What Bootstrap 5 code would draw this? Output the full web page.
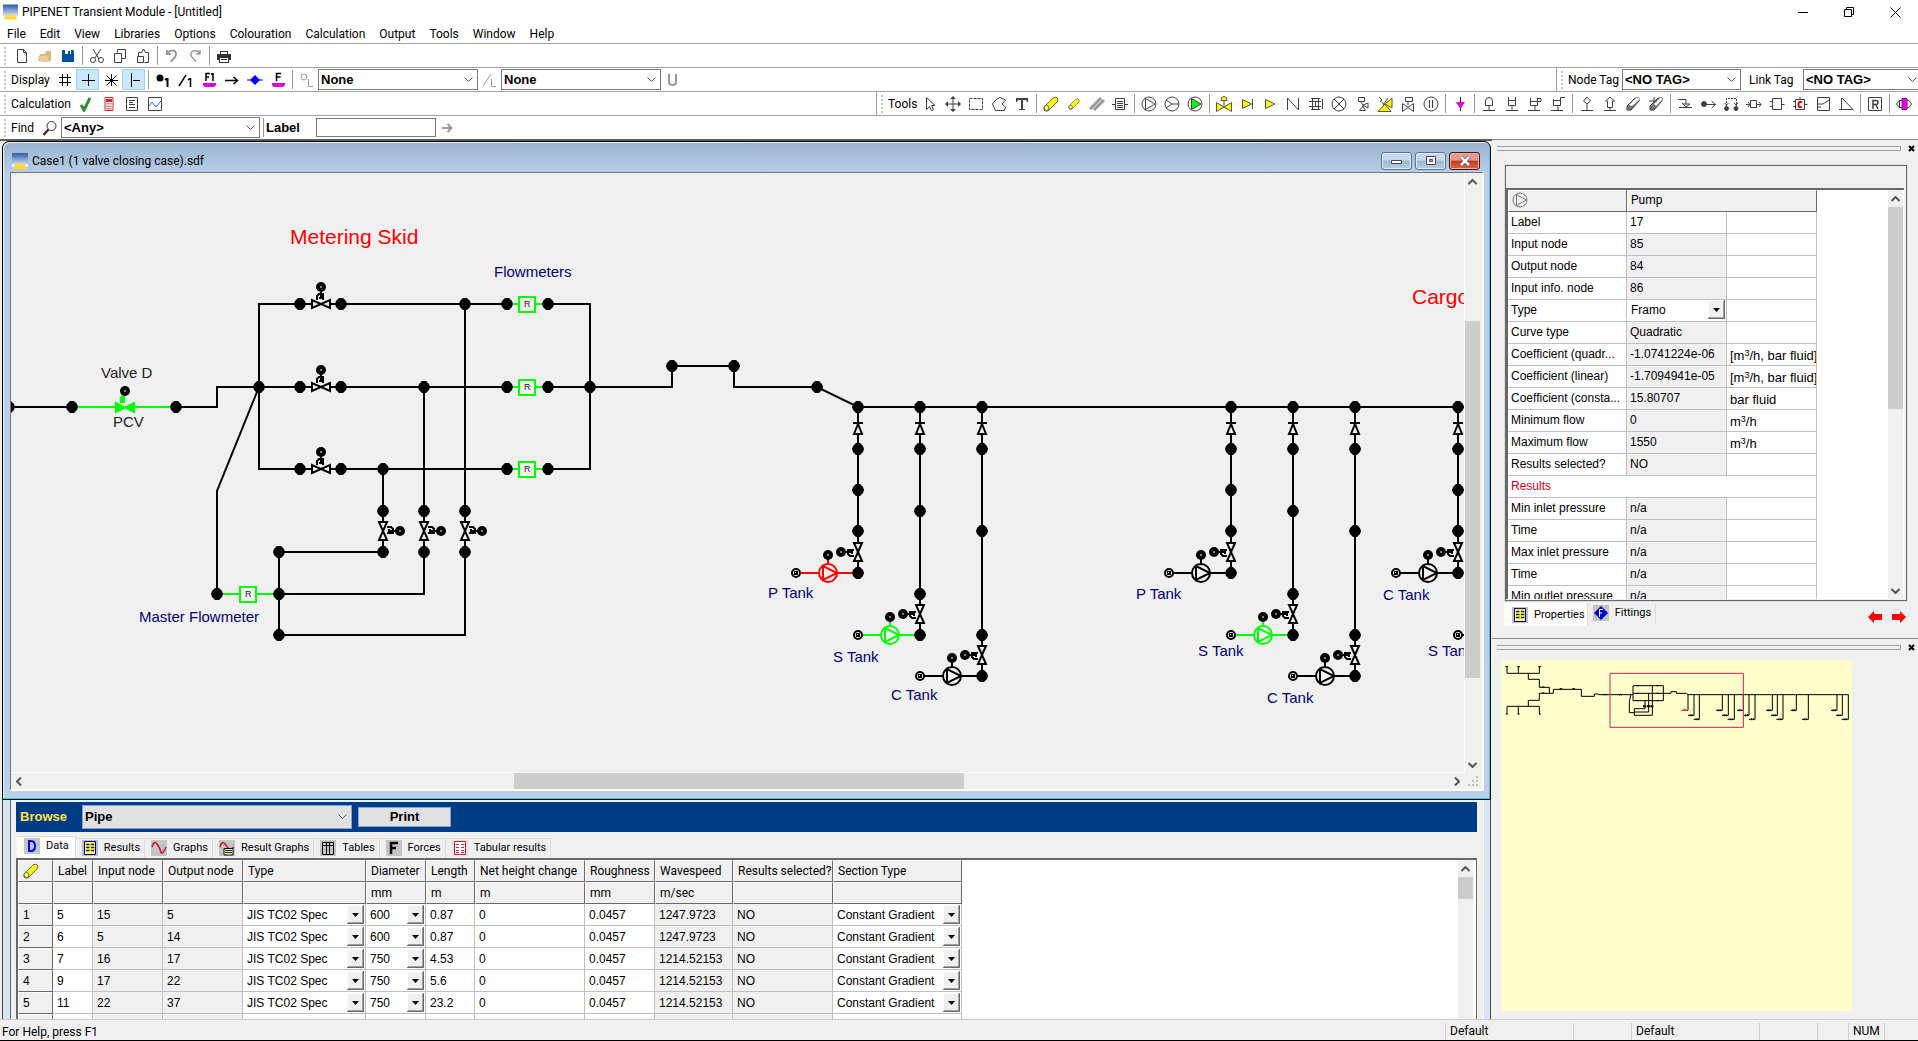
<!DOCTYPE html>
<html lang="en">
<head>
<meta charset="utf-8">
<meta name="viewport" content="width=device-width, initial-scale=1">
<title>PIPENET Transient Module - [Untitled]</title>
<link rel="stylesheet" href="https://cdn.jsdelivr.net/npm/bootstrap@5.3.0/dist/css/bootstrap.min.css">
<style>
:root{--face:#f0f0f0;--line:#a0a0a0;--dark:#696969;--ui:Roboto,"Open Sans",sans-serif;--grid:"Liberation Sans",Arial,sans-serif}
body{font:12px/16px var(--ui);color:#000;background:#fff;height:100vh;overflow:hidden}
button{padding:0;border:0;background:none;color:inherit;font:inherit}
a{color:inherit;text-decoration:none}
svg{display:block;flex:none}
.titlebar{height:24px;padding-left:3px}
.titlebar button{width:46px;height:20px;display:flex;align-items:center;justify-content:center}
.menubar{height:19px;padding-left:7px;gap:14px}
.tbrow{height:24px;border-top:1px solid var(--line);overflow:hidden}
.tb{height:23px;padding-left:10px;position:relative;align-items:center;display:flex;background:#fff}
.tb::before{content:"";position:absolute;left:4px;top:3px;bottom:2px;border-left:2px dotted #c4c4c4}
.tb-right{border-left:1px solid var(--line);flex:none}
.tb button{width:23px;height:21px;display:flex;align-items:center;justify-content:center;flex:none;color:#404040}
.tb button.on{background:#cce8ff;border:1px solid #99d1ff}
.tb i{width:6px;height:19px;flex:none;display:flex;justify-content:center}
.tb i::before{content:"";border-left:1px solid #999}
.tb label,.tb .cap{flex:none;padding-left:1px}
.combo{appearance:none;border:1px solid #7a7a7a;border-radius:0;font:bold 13px/16px var(--grid);height:21px;padding:0 20px 0 2px;flex:none;color:#000;
 background:#fff url("data:image/svg+xml,%3Csvg xmlns='http://www.w3.org/2000/svg' width='9' height='6'%3E%3Cpath d='M.5.5l4 4 4-4' fill='none' stroke='%23555'/%3E%3C/svg%3E") no-repeat right 4px center}
.findbox{border:1px solid #7a7a7a;width:120px;height:19px;font:13px/16px var(--grid);flex:none}
.mdi{background:var(--face);border-top:2px solid #5f5f5f;min-width:0}
.docwin{margin:0 1px 0 2px;border:1px solid #000;border-radius:7px 7px 0 0;background:#b9d1ea;padding:0 6px 8px 7px;box-shadow:inset -1px -1px 0 #41c8e8,inset 1px 1px 0 #e8f2fb;min-height:0;background-image:linear-gradient(#9ab3d0,#b9d1ea 34px)}
.doctitle{height:30px;padding:0 4px 0 2px}
.docbtns{gap:3px}
.docbtn{width:31px;height:18px;border:1px solid #5c7390!important;border-radius:3px;background:linear-gradient(#c6d8ec 45%,#9db7d3 50%,#b7cde4)!important;box-shadow:inset 0 0 0 1px #dfeaf5;display:flex;align-items:center;justify-content:center}
.docbtn.shut{background:linear-gradient(#e29a8b 45%,#c4391f 50%,#d5674b)!important;border-color:#4c1410!important;box-shadow:inset 0 0 0 1px #e9b3a7}
.client{border:solid;border-color:#777 #fff #fff #777;border-width:1px 2px 2px 1px;background:var(--face);min-height:0}
.client>div{min-height:0}
.plan{flex:1 1 0;min-width:0;overflow:hidden;border-right:1px solid #fff;border-bottom:1px solid #fff}
.plan text{font:15px var(--grid);fill:#00007c}
.plan .hd{font-size:21px;fill:#f00}
.plan .blk{fill:#222}
.plan .meter{font-size:9px;fill:#222}
.sbv{width:15px;flex:none;display:flex;flex-direction:column;background:var(--face)}
.client .sbv{margin-right:2px}
.sbh{height:16px;flex:none;display:flex;background:var(--face)}
.sbv button,.sbh button{flex:none;width:15px;height:17px;display:flex;align-items:center;justify-content:center}
.thumb{background:#cdcdcd}
.lower{height:219px;flex:none;margin:0 1px 0 2px;border-left:1px solid #444;border-right:1px solid #444;background:#d7e4f2;padding:0 6px 0 7px;overflow:hidden}
.lower-in{background:var(--face);border-left:1px solid #666;padding:2px 6px 0 5px;border-right:1px solid #fff}
.browsebar{background:#003c85;height:30px;padding-left:4px;flex:none}
.browsebar label{color:#ffe645;font:bold 13px/16px var(--grid);width:62px}
.browsebar .combo{width:270px;height:24px;background-color:#e1e1e1;border-color:#7ea6d8}
.browsebar button{width:93px;height:20px;margin-left:6px;background:#e1e1e1;border:1px solid #7ea6d8;font:bold 13px/16px var(--grid)}
.tabs{height:26px;padding-left:1px;flex:none;align-items:flex-end;border:0;font-size:11px}
.tabs button{height:20px;display:flex;align-items:center;gap:6px;padding:0 4px 2px 6px;border:1px solid #dcdcdc;border-width:1px 1px 0 0;white-space:nowrap}
.tabs button.on{height:22px;background:#fff;padding:0 6px 3px 7px}
.gridbox{border:2px solid var(--dark);border-width:2px 1px 0 2px;background:#fff;overflow:hidden;min-height:0}
.gridbox .sbv{margin-right:3px}
.g{table-layout:fixed;border-collapse:separate;border-spacing:0;flex:none;width:0}
.g td,.g th{height:22px;padding:0 2px 0 4px;font:12px/16px var(--grid);white-space:nowrap;overflow:hidden;border:solid #c0c0c0;border-width:0 1px 1px 0;vertical-align:middle}
.g th{background:var(--face);font-family:var(--ui);border:1px solid #fff;border-right-color:var(--dark);border-bottom-color:var(--dark)}
.g tbody th{font-family:var(--grid)}
.g .ro{background:var(--face)}
.g td.p-sel{padding:0 1px 0 0}
.g select{appearance:none;border:0;border-radius:0;width:100%;height:20px;padding:0 18px 0 4px;font:12px/16px var(--grid);color:#000;display:block;
 background:#fff url("data:image/svg+xml,%3Csvg xmlns='http://www.w3.org/2000/svg' width='17' height='19'%3E%3Cpath d='M0 0h17v19H0z' fill='%23696969'/%3E%3Cpath d='M0 0h16v18H0z' fill='%23fff'/%3E%3Cpath d='M1 1h15v17H1z' fill='%23a0a0a0'/%3E%3Cpath d='M1 1h14v16H1z' fill='%23f0f0f0'/%3E%3Cpath d='M5 8h7l-3.5 4z'/%3E%3C/svg%3E") no-repeat right 0}
.dock{width:426px;flex:none;background:var(--face);border-top:1px solid #888}
.grip{height:18px;padding:0 1px 1px 5px;gap:4px;flex:none}
.grip span{flex:1;height:5px;border:1px solid var(--line);border-left:0}
.grip button{width:12px;height:12px;display:flex;align-items:center;justify-content:center}
.props{margin:7px 11px 0 13px;height:436px;border:1px solid var(--dark);outline:1px solid #dedede;flex:none;display:flex;flex-direction:column}
.props-body{border:solid var(--dark);border-width:2px 0 0 2px;background:#fff;margin:22px 2px 1px 0;min-height:0;overflow:hidden;flex:1}
.props .sbv{margin-right:1px}
.props .g td,.props .g th{padding:0 2px 2px 3px}
.props .g td.p-sel{padding:0 1px 1px 0}
.props .g td.unit{font-size:13px;padding:3px 3px 0 3px}
.g .red{color:#d00020}
.g sup{font-size:9px;line-height:0}
.ptabs{padding:2px 12px 0;height:37px;flex:none;font-size:11px}
.ptabs .ptab{height:20px;display:flex;align-items:center;gap:6px;padding:0 4px 0 5px;border-right:1px solid #dcdcdc}
.ptabs .ptab.on{height:23px;background:#fff;padding:0 2px 0 8px}
.over{border-top:1px solid #888}
.mapbox{margin:3px 0 0 9px;width:351px;height:351px;background:#ffffcb}
.statusbar{height:22px;flex:none;background:var(--face);border-top:1px solid #ccc;border-bottom:1px solid #000;padding:3px 0 0 2px}
.statusbar span{border-left:1px solid #d0d0d0;height:17px;padding-left:4px;flex:none}
</style>
</head>
<body class="d-flex flex-column">

<svg width="0" height="0" class="position-absolute" aria-hidden="true">
<defs>
<linearGradient id="sky" x1="0" y1="0" x2="0" y2="1"><stop offset="0" stop-color="#2a5ca8"/><stop offset=".7" stop-color="#b4cbe6"/><stop offset="1" stop-color="#fff"/></linearGradient>
<symbol id="logo" viewBox="0 0 16 16"><path fill="url(#sky)" d="M0 0h16v14H0z"/><path fill="#ffd83a" d="M1 16c1-3 3-6 7-6s6 3 7 6z"/></symbol>
<symbol id="pipe" viewBox="0 0 16 16"><path d="M1 11l9-9 3-1 2 2-1 3-9 9-3 0-1-1z" fill="#ff0" stroke="#665" /><circle cx="3.500" cy="12" r="2.500" fill="#ff6" stroke="#665"/></symbol>
<symbol id="pumpi" viewBox="0 0 16 16"><g fill="none" stroke="currentColor"><circle cx="8" cy="8" r="7"/><path d="M4.500 2.500v11L14 8z"/></g></symbol>
<symbol id="sheet" viewBox="0 0 16 16"><path fill="#b8b8f0" d="M0 0h16v16H0z"/><path fill="#ff6" stroke="#000080" d="M2.500 1.500h11v13h-11z"/><path stroke="#222" stroke-width="1.500" d="M4 4.500h3.500M4 7.500h3.500M4 10.500h3.500M8.800 4.500h3.500M8.800 7.500h3.500M8.800 10.500h3.500"/></symbol>
<g id="nd"><path d="M-2-6h4l3 3 1 3-1 3-3 3h-4l-3-3-1-3 1-3z"/></g>
<g id="nc"><circle r="5"/><circle r="1" fill="#aaa"/></g>
<g id="ns"><circle r="4" fill="#f0f0f0" stroke="#000" stroke-width="2"/><path d="M-2-2h4v4h-4z" fill="#000"/><path d="M-1-1h1v1h-1z" fill="#fff"/></g>
<g id="vl" stroke="#000" stroke-width="2"><path d="M0-14v8" fill="none"/><path d="M-9-4v8L9-4v8z" fill="#f0f0f0"/><path d="M-4-4v-4l2-2h4v6M-2-6h3" fill="none"/><use href="#nc" y="-17" stroke="none"/></g>
<g id="ck" fill="#f0f0f0" stroke="#000" stroke-width="2"><path d="M-5-5h10M0-4l-4 10h8z"/></g>
<g id="dr"><path d="M-62 0H0M-30 0v-16" stroke="currentColor" stroke-width="2"/><circle cx="-30" r="9" fill="#f0f0f0" stroke="currentColor" stroke-width="2"/><path d="M-35-7v14l14-7z" fill="none" stroke="currentColor" stroke-width="2"/><use href="#nc" x="-30" y="-18"/><use href="#ns" x="-62"/><use href="#vl" transform="translate(0 -21) rotate(-90)"/><use href="#nd"/></g>
<g id="fm"><path d="M-16 0h32" stroke="#0f0" stroke-width="2"/><path d="M-8-7H8V8H-8z" fill="#f4f4f4" stroke="#0f0" stroke-width="2"/></g>
</defs>
</svg>

<header class="flex-shrink-0">
<div class="titlebar d-flex align-items-center">
<svg width="15" height="16"><use href="#logo"/></svg><span class="ms-1 flex-grow-1">PIPENET Transient Module - [Untitled]</span>
<button aria-label="Minimise"><svg width="10" height="10"><path d="M0 5.500h10" stroke="#000"/></svg></button>
<button aria-label="Restore"><svg width="10" height="10" fill="none" stroke="#000"><path d="M.5 2.500h7v7h-7zM2.500 2V.5h7v7H8"/></svg></button>
<button aria-label="Close"><svg width="11" height="11" stroke="#000"><path d="M.5.5l10 10M10.500.5l-10 10"/></svg></button>
</div>
<nav class="menubar d-flex align-items-center"><a href="#">File</a><a href="#">Edit</a><a href="#">View</a><a href="#">Libraries</a><a href="#">Options</a><a href="#">Colouration</a><a href="#">Calculation</a><a href="#">Output</a><a href="#">Tools</a><a href="#">Window</a><a href="#">Help</a></nav>

<div class="tbrow"><div class="tb">
<button aria-label="New"><svg width="16" height="16" fill="none" stroke="currentColor"><path d="M3.500 1.500h6l3 3v10h-9zM9.500 1.500v3h3"/></svg></button>
<button aria-label="Open"><svg width="16" height="16"><path d="M1 13l2-7h5l1-3h5v10z" fill="#dcb67a"/><path d="M1 8h9l3 6H4z" fill="#e9cd9c"/></svg></button>
<button aria-label="Save"><svg width="16" height="16"><path d="M2 2h11l1 1v11H2z" fill="#00539c"/><path d="M5 2h6v4H5z" fill="#fff"/><path d="M8 3h2v3H8z" fill="#00539c"/></svg></button><i></i>
<button aria-label="Cut"><svg width="16" height="16" fill="none" stroke="currentColor"><path d="M4 1l6 10M12 1L6 10"/><circle cx="4" cy="12" r="2.500"/><circle cx="12" cy="12" r="2.500"/></svg></button>
<button aria-label="Copy"><svg width="16" height="16" fill="none" stroke="currentColor"><path d="M5.500 4.500v-3h8v9h-4M2.500 5.500h7v9h-7z"/></svg></button>
<button aria-label="Paste"><svg width="16" height="16" fill="none" stroke="currentColor"><path d="M3.500 8V4.500h3L8.500 1l2 3.500h3v10h-4M2.500 8.500h6v6h-6z"/></svg></button><i></i>
<button aria-label="Undo"><svg width="16" height="16" fill="none" stroke="#999" stroke-width="2"><path d="M3 2v4h4M3 6c2-4 9-5 9 0 0 4-4 5-5 8"/></svg></button>
<button aria-label="Redo"><svg width="16" height="16" fill="none" stroke="#999" stroke-width="1.500"><path d="M13 2v4H9M13 6C11 1 3 2 4 7c0 3 4 4 5 7"/></svg></button><i></i>
<button aria-label="Print"><svg width="16" height="16"><path d="M4 3h8v3H4zM1 6h14v6h-2v3H3v-3H1z" fill="#333"/><path d="M5 4h6v2H5zM4 10h8v4H4z" fill="#fff"/><path d="M5 11h6v1H5z" fill="#333"/></svg></button>
</div></div>

<div class="tbrow d-flex"><div class="tb flex-grow-1"><span class="cap" style="width:43px">Display</span>
<button aria-label="Grid"><svg width="16" height="16" stroke="#000"><path d="M5.500 2v12M10.500 2v12M2 5.500h12M2 10.500h12"/></svg></button>
<button class="on" aria-label="Ortho"><svg width="16" height="16" stroke="#000"><path d="M8.500 2v12M2 8.500h13"/></svg></button>
<button aria-label="Isometric"><svg width="16" height="16" stroke="#000"><path d="M8.500 2v12M2 8.500h13M3.500 3.500l10 10M13.500 3.500l-10 10"/></svg></button>
<button class="on" aria-label="Snap"><svg width="16" height="16" stroke="#000"><path d="M5.500 1v14M7 8.500h7"/></svg></button><i></i>
<button aria-label="Node labels"><svg width="16" height="16"><circle cx="5" cy="6" r="3.500"/><path d="M12.500 6v9M10 8l2-1.500" stroke="#000" stroke-width="2"/></svg></button>
<button aria-label="Link labels"><svg width="16" height="16" stroke="#000" stroke-width="1.500"><path d="M1 14L8 3M12.500 6v9M10 8l2-1.500"/></svg></button>
<button aria-label="Fitting labels"><svg width="16" height="16" fill="none"><path d="M5 9V1.500h4M5 5h3M12 1v8M10 2.500l2-1" stroke="#000" stroke-width="1.500"/><path d="M2 11h13v2l-2 2H4l-2-2z" fill="#e000e0"/></svg></button>
<button aria-label="Direction"><svg width="16" height="16"><path d="M1 8.500h12M9.500 5l4 3.500-4 3.500" fill="none" stroke="#000" stroke-width="1.500"/></svg></button>
<button aria-label="Components"><svg width="16" height="16"><path d="M0 8h16" stroke="#00f"/><path d="M8 3l5 5-5 5-5-5z" fill="#00f"/></svg></button>
<button aria-label="Fittings"><svg width="16" height="16" fill="none"><path d="M6.500 9V1.500H11M6.500 5h4" stroke="#000" stroke-width="1.500"/><path d="M2 11h13v2l-2 2H4l-2-2z" fill="#e000e0"/></svg></button><i></i>
<button aria-label="Node attribute"><svg width="16" height="16" fill="none" stroke="#999"><circle cx="5" cy="5" r="3"/><path d="M9.500 7v7.500H14"/></svg></button>
<select class="combo" style="width:160px" aria-label="Node attribute shown"><option>None</option></select>
<button aria-label="Link attribute"><svg width="16" height="16" fill="none" stroke="#999"><path d="M1 14L9 2M9.500 7v7.500H14"/></svg></button>
<select class="combo" style="width:160px" aria-label="Link attribute shown"><option>None</option></select>
<button aria-label="Units"><svg width="16" height="16" fill="none" stroke="#999" stroke-width="2"><path d="M4 2v8q0 3 3.500 3T11 10V2"/></svg></button>
</div><div class="tb tb-right" style="width:362px"><label for="nt" style="width:55px">Node Tag</label><select id="nt" class="combo" style="width:119px"><option>&lt;NO TAG&gt;</option></select><label for="lt" class="ps-2" style="width:62px">Link Tag</label><select id="lt" class="combo" style="width:119px"><option>&lt;NO TAG&gt;</option></select></div></div>

<div class="tbrow d-flex"><div class="tb flex-grow-1"><span class="cap" style="width:64px">Calculation</span>
<button aria-label="Check"><svg width="16" height="16"><path d="M3 9l3 5 6-12" fill="none" stroke="#388a34" stroke-width="3"/></svg></button>
<button aria-label="Calculate"><svg width="16" height="16"><path d="M4 1.500h8v13H4z" fill="#fff" stroke="#c8282d"/><path d="M5 3h6v3H5z" fill="#c8282d"/><path d="M6 7v7M8 7v7M10 7v7" stroke="#c8282d" stroke-dasharray="1.500 1"/></svg></button>
<button aria-label="Report"><svg width="16" height="16" fill="none" stroke="currentColor"><path d="M2.500 1.500h11v13h-11zM5 4.500h6M5 6.500h4M5 8.500h6M5 11.500h6"/></svg></button>
<button aria-label="Graph"><svg width="16" height="16" fill="none" stroke="#444"><path d="M1.500 1.500h13v13h-13z"/><path d="M2 10l3-4 4 5 5-6" stroke="#2475b0"/></svg></button>
</div><div class="tb tb-right" style="width:1042px"><span class="cap" style="width:31px">Tools</span>
<button aria-label="Select"><svg width="16" height="16" fill="none" stroke="currentColor"><path d="M4.500 1.500v12l3-3 2 4 2-1-2-4h3.500z"/></svg></button>
<button aria-label="Pan"><svg width="16" height="16"><path d="M8 0l3 3H5zM8 16l3-3H5zM0 8l3-3v6zM16 8l-3-3v6zM7.500 3v10h1V3zM3 7.500v1h10v-1z" fill="#404040"/></svg></button>
<button aria-label="Area"><svg width="16" height="16" fill="none" stroke="currentColor" stroke-dasharray="3 1"><path d="M1.500 2.500h13v11h-13z"/></svg></button>
<button aria-label="Polygon"><svg width="16" height="16" fill="none" stroke="currentColor"><path d="M5 3.500L9 1.500 14.500 4 11 8l3.500 3-1 3.500h-9L1.500 8z"/></svg></button>
<button aria-label="Text"><svg width="16" height="16"><path d="M2 2h12v4h-1L12 4H9v9h2v1H5v-1h2V4H4L3 6H2z" fill="#404040"/></svg></button><i></i>
<button aria-label="Pipe"><svg width="16" height="16"><use href="#pipe"/></svg></button>
<button aria-label="Short pipe"><svg width="12" height="12"><use href="#pipe"/></svg></button>
<button aria-label="Duct"><svg width="16" height="16" stroke="#999" stroke-width="3"><path d="M1 13L12 2M5 14L15 4"/></svg></button>
<button aria-label="Equipment"><svg width="16" height="16" fill="none" stroke="currentColor"><path d="M3.500 2.500h9v11h-9zM5 5.500h6M5 7.500h6M5 9.500h6M5 11.500h6M0 8.500h3M13 8.500h3"/></svg></button><i></i>
<button aria-label="Pump"><svg width="16" height="16"><use href="#pumpi"/></svg></button>
<button aria-label="Turbo pump"><svg width="16" height="16" fill="none" stroke="currentColor"><circle cx="8" cy="8" r="7"/><path d="M2 4l6 4-6 4M8 8h7"/></svg></button>
<button aria-label="Booster"><svg width="16" height="16" stroke="currentColor"><circle cx="8" cy="8" r="7" fill="none"/><path d="M4.500 2.500v11L14 8z" fill="#0f0"/></svg></button><i></i>
<button aria-label="Valve"><svg width="16" height="16" fill="#ff0" stroke="#554"><path d="M.5 6.500v9l15-9v9zM8 10V4M5 4.500q0-4 3-4t3 4z"/></svg></button>
<button aria-label="Check valve"><svg width="16" height="16" fill="#ff0" stroke="#554"><path d="M3.500 3.500v9l9-4.500zM13.500 3v10"/></svg></button>
<button aria-label="Non-return valve"><svg width="16" height="16" fill="#ff0" stroke="#554"><path d="M3.500 3.500v9L13 8z"/></svg></button>
<button aria-label="Fluid damped valve"><svg width="16" height="16" fill="none" stroke="currentColor"><path d="M2.500 14V2l11 12V2"/></svg></button>
<button aria-label="Bursting disc"><svg width="16" height="16" fill="none" stroke="currentColor"><path d="M3 2.500h9M3 13.500h9M4.500 2v11M10.500 2v11M1 5.500h12M1 10.500h12M7.500 5v5M14.500 3v10"/></svg></button>
<button aria-label="Junction"><svg width="16" height="16" fill="none" stroke="currentColor"><circle cx="8" cy="8" r="7"/><path d="M3 3l10 10M13 3L3 13"/></svg></button>
<button aria-label="Regulator"><svg width="16" height="16" fill="none" stroke="currentColor"><path d="M4.500 1.500h6v4h-6zM6.500 5.500l3 4-4 5h6l-3-5M9 9l5-2v5z"/></svg></button>
<button aria-label="Relief valve"><svg width="16" height="16" fill="#ff0" stroke="#554"><path d="M1 15.500L8 8l6 7.500zM8 8l7-6v10z"/><path d="M2 1l3 3-2 1 4 3M11 2L6 9" fill="none"/></svg></button>
<button aria-label="Inertial valve"><svg width="16" height="16" fill="none" stroke="currentColor"><path d="M5.500 1.500h7v4h-7zM8 6v3M2.500 7.500v8l11-8v8z"/></svg></button>
<button aria-label="Surge relief"><svg width="16" height="16" fill="none" stroke="currentColor"><circle cx="8" cy="8" r="7"/><path d="M6.500 4v8M9.500 4v8"/></svg></button><i></i>
<button aria-label="Nozzle"><svg width="16" height="16"><path d="M8.500 1v14" stroke="#606"/><path d="M4 6h9l-4.500 7z" fill="#e000e0"/></svg></button><i></i>
<button aria-label="Accumulator"><svg width="16" height="16" fill="none" stroke="currentColor"><path d="M4.500 9.500V5q0-3.500 3.500-3.500T11.500 5v4.500zM8 10v4M2 14.500h12"/></svg></button>
<button aria-label="Simple tank"><svg width="16" height="16" fill="none" stroke="currentColor"><path d="M4.500 1v8.500h7V1M4.500 4.500h7M8 10v4M2 14.500h12"/></svg></button>
<button aria-label="Surge tank"><svg width="16" height="16" fill="none" stroke="currentColor"><path d="M3.500 2v7.500h7V2M3.500 5.500h7M10 2.500h4v3h-3M8 10v4M1 14.500h12"/></svg></button>
<button aria-label="Receiving vessel"><svg width="16" height="16" fill="none" stroke="currentColor"><path d="M3.500 3v6.500h7V1.500H15M3.500 4.500h7M8 10v4M1 14.500h12"/></svg></button><i></i>
<button aria-label="Vacuum breaker"><svg width="16" height="16" fill="none" stroke="currentColor"><path d="M8 1L4.500 5 8 8l3.500-3zM8 8v6M2 14.500h12"/></svg></button>
<button aria-label="Air valve"><svg width="16" height="16" fill="none" stroke="currentColor"><path d="M8 1L3.500 5h2v6.500h5V5h2zM8 11v3M2 14.500h12"/></svg></button>
<button aria-label="Cavity"><svg width="16" height="16" stroke="currentColor"><path d="M2 10l8-8h4v3l-8 9H2z" fill="#777"/><path d="M4 9l7-7h3v2L7 10z" fill="#fff" stroke="none"/></svg></button>
<button aria-label="Infinite pipe"><svg width="16" height="16" stroke="currentColor"><path d="M2 10l8-8h4v3l-8 9H2z" fill="#777"/><path d="M6 8l6-6h2v2L8 10z" fill="#fff" stroke="none"/><path d="M1 5h8M6 1v6" fill="none"/></svg></button><i></i>
<button aria-label="Sensor"><svg width="16" height="16" fill="none" stroke="currentColor"><path d="M1 3.500h8v5M2 11.500h13M5 7l4 4 4-3H6" /></svg></button>
<button aria-label="Information link"><svg width="16" height="16" fill="none" stroke="currentColor"><circle cx="4" cy="8" r="2.500" fill="#404040"/><path d="M6 8.500h9M11.500 5l4 3.500-4 3.500"/></svg></button>
<button aria-label="Pressure link"><svg width="16" height="16" fill="none" stroke="currentColor"><path d="M3.500 10V2.500h10V10" stroke-dasharray="2 1"/><circle cx="3.500" cy="12.500" r="2" fill="#404040"/><circle cx="13" cy="12.500" r="2" fill="#404040"/><path d="M1.500 7l2 2 2-2M11 7l2 2 2-2"/></svg></button>
<button aria-label="Transfer"><svg width="16" height="16" fill="none" stroke="currentColor"><path d="M4.500 4.500h6v7h-6zM0 8.500h4M2 6l2 2.500L2 11M11 8.500h4M13 6l2 2.500-2 2.500"/></svg></button>
<button aria-label="Block"><svg width="16" height="16" fill="none" stroke="currentColor"><path d="M3.500 2.500h9v11h-9zM1 5.500h2M1 10.500h2M13 8.500h2.500"/></svg></button>
<button aria-label="Controller"><svg width="16" height="16" fill="none" stroke="currentColor"><path d="M3.500 3.500h9v10h-9zM1 5.500h2M1 10.500h2M13 8.500h2.500M8 1v2"/><path d="M10 6.500q-3.500-2-3.500 2t3.500 2" stroke="#d00" stroke-width="2"/></svg></button>
<button aria-label="Curve"><svg width="16" height="16" fill="none" stroke="currentColor"><path d="M2.500 1.500h12v13h-12zM3 8h5l6-4M3 11h3"/></svg></button>
<button aria-label="Ramp"><svg width="16" height="16" fill="none" stroke="currentColor"><path d="M3.500 2v12M1 13.500h14L4 2"/></svg></button><i></i>
<button aria-label="Results"><svg width="16" height="16" fill="none" stroke="currentColor"><path d="M1.500 1.500h13v13h-13z"/><path d="M6 13V4.500h3q2 0 2 2t-2 2H6M9 9l2 4" stroke-width="1.500"/></svg></button><i></i>
<button aria-label="Flange"><svg width="16" height="16" fill="none" stroke="currentColor"><path d="M3 4.500h10l2.500 3.500L13 11.500H3L.5 8zM3.500 5v6"/><path d="M6 2.500h5v11H6z" fill="#e000e0" stroke="#a0a"/></svg></button>
</div></div>

<div class="tbrow d-flex"><div class="tb"><label for="fk" style="width:28px">Find</label>
<button aria-label="Search"><svg width="16" height="16" fill="none" stroke="#333"><circle cx="9.500" cy="6" r="4.500"/><path d="M6.500 9.500L1.500 15" stroke-width="2.500"/></svg></button>
<select id="fk" class="combo" style="width:199px"><option>&lt;Any&gt;</option></select><i></i><label for="fl" class="ps-0" style="width:50px;font:bold 13px/16px var(--grid)">Label</label>
<input id="fl" class="findbox"><button aria-label="Go"><svg width="12" height="12"><path d="M0 6h9M5.500 2l4 4-4 4" fill="none" stroke="#999" stroke-width="2"/></svg></button>
</div></div>
</header>

<main class="d-flex flex-grow-1" style="min-height:0">
<section class="mdi flex-grow-1 d-flex flex-column">
<div class="docwin flex-grow-1 d-flex flex-column">
<div class="doctitle d-flex align-items-center flex-shrink-0 pt-2">
<svg width="16" height="16"><use href="#logo"/></svg><span class="ms-1 flex-grow-1">Case1 (1 valve closing case).sdf</span>
<span class="docbtns d-flex"><button class="docbtn" aria-label="Minimise drawing"><svg width="13" height="8"><path d="M1.500 3.500h10v3h-10z" fill="#fff" stroke="#445"/></svg></button><button class="docbtn" aria-label="Maximise drawing"><svg width="12" height="10"><path d="M1.500.5h9v8h-9z" fill="#fff" stroke="#445"/><path d="M4.500 3.500h3v2h-3z" fill="#9db7d3" stroke="#445"/></svg></button><button class="docbtn shut" aria-label="Close drawing"><svg width="12" height="10"><path d="M2 1l8 8M10 1L2 9" stroke="#545" stroke-width="4"/><path d="M2 1l8 8M10 1L2 9" stroke="#fff" stroke-width="2.500"/></svg></button></span>
</div>
<div class="client flex-grow-1 d-flex flex-column">
<div class="d-flex flex-grow-1">
<div class="plan">
<svg width="100%" height="100%" role="img" aria-label="Pipe network">
<g transform="translate(-11 -173)">
<g fill="none" stroke="#000" stroke-width="2">
<path d="M11 407H72M176 407H217V387H259M259 304H590V469H259zM259 387H672V366H734V387H817L858 407H1466"/>
<path d="M259 387L217 491V594M465 304V635H279V552H383V469M424 387V594H279"/>
<path d="M858 407V573M920 407V635M982 407V676M1231 407V573M1293 407V635M1355 407V676M1458 407V573"/>
<path d="M72 407H176M217 594H279" stroke="#0f0"/>
</g>
<use href="#fm" x="527" y="304"/><use href="#fm" x="527" y="387"/><use href="#fm" x="527" y="469"/><use href="#fm" x="248" y="594"/>
<use href="#vl" x="321" y="304"/><use href="#vl" x="321" y="387"/><use href="#vl" x="321" y="469"/>
<use href="#vl" transform="translate(383 531) rotate(90)"/><use href="#vl" transform="translate(424 531) rotate(90)"/><use href="#vl" transform="translate(465 531) rotate(90)"/>
<path d="M116 403v9l18-9v9zM121 403v-5l3-4v9" fill="#0f0" stroke="#0f0" stroke-width="2"/><use href="#nc" x="125" y="391"/>
<use href="#nd" x="9" y="407"/><use href="#nd" x="72" y="407"/><use href="#nd" x="176" y="407"/><use href="#nd" x="259" y="387"/>
<use href="#nd" x="300" y="304"/><use href="#nd" x="341" y="304"/><use href="#nd" x="465" y="304"/><use href="#nd" x="507" y="304"/><use href="#nd" x="548" y="304"/>
<use href="#nd" x="300" y="387"/><use href="#nd" x="341" y="387"/><use href="#nd" x="424" y="387"/><use href="#nd" x="507" y="387"/><use href="#nd" x="548" y="387"/><use href="#nd" x="590" y="387"/>
<use href="#nd" x="300" y="469"/><use href="#nd" x="341" y="469"/><use href="#nd" x="383" y="469"/><use href="#nd" x="507" y="469"/><use href="#nd" x="548" y="469"/>
<use href="#nd" x="383" y="511"/><use href="#nd" x="424" y="511"/><use href="#nd" x="465" y="511"/><use href="#nd" x="383" y="552"/><use href="#nd" x="424" y="552"/><use href="#nd" x="465" y="552"/>
<use href="#nd" x="279" y="552"/><use href="#nd" x="279" y="594"/><use href="#nd" x="279" y="635"/><use href="#nd" x="217" y="594"/>
<use href="#nd" x="672" y="366"/><use href="#nd" x="734" y="366"/><use href="#nd" x="817" y="387"/>
<use href="#nd" x="858" y="407"/><use href="#nd" x="858" y="449"/><use href="#nd" x="858" y="490"/><use href="#nd" x="858" y="531"/>
<use href="#nd" x="920" y="407"/><use href="#nd" x="920" y="449"/><use href="#nd" x="920" y="511"/><use href="#nd" x="920" y="594"/>
<use href="#nd" x="982" y="407"/><use href="#nd" x="982" y="449"/><use href="#nd" x="982" y="531"/><use href="#nd" x="982" y="635"/>
<use href="#nd" x="1231" y="407"/><use href="#nd" x="1231" y="449"/><use href="#nd" x="1231" y="490"/><use href="#nd" x="1231" y="531"/>
<use href="#nd" x="1293" y="407"/><use href="#nd" x="1293" y="449"/><use href="#nd" x="1293" y="511"/><use href="#nd" x="1293" y="594"/>
<use href="#nd" x="1355" y="407"/><use href="#nd" x="1355" y="449"/><use href="#nd" x="1355" y="531"/><use href="#nd" x="1355" y="635"/>
<use href="#nd" x="1458" y="407"/><use href="#nd" x="1458" y="449"/><use href="#nd" x="1458" y="490"/><use href="#nd" x="1458" y="531"/>
<use href="#ck" x="858" y="428"/><use href="#ck" x="920" y="428"/><use href="#ck" x="982" y="428"/><use href="#ck" x="1231" y="428"/><use href="#ck" x="1293" y="428"/><use href="#ck" x="1355" y="428"/><use href="#ck" x="1458" y="428"/>
<use href="#dr" x="858" y="573" color="#f00"/><use href="#dr" x="920" y="635" color="#0f0"/><use href="#dr" x="982" y="676" color="#000"/>
<use href="#dr" x="1231" y="573" color="#000"/><use href="#dr" x="1293" y="635" color="#0f0"/><use href="#dr" x="1355" y="676" color="#000"/>
<use href="#dr" x="1458" y="573" color="#000"/><use href="#dr" x="1520" y="635" color="#000"/>
<text class="hd" x="290" y="244">Metering Skid</text><text class="hd" x="1412" y="304">Cargo Tanks</text>
<text x="494" y="277">Flowmeters</text><text x="139" y="622">Master Flowmeter</text>
<text class="blk" x="101" y="378">Valve D</text><text class="blk" x="113" y="427">PCV</text>
<text x="768" y="598">P Tank</text><text x="833" y="662">S Tank</text><text x="891" y="700">C Tank</text>
<text x="1136" y="599">P Tank</text><text x="1198" y="656">S Tank</text><text x="1267" y="703">C Tank</text><text x="1383" y="600">C Tank</text><text x="1428" y="656">S Tank</text>
<text class="meter" x="524" y="307">R</text><text class="meter" x="524" y="390">R</text><text class="meter" x="524" y="472">R</text><text class="meter" x="245" y="597">R</text>
</g></svg>
</div>
<div class="sbv"><button aria-label="Scroll up"><svg width="9" height="6"><path d="M.5 5l4-4 4 4" fill="none" stroke="#555" stroke-width="2"/></svg></button><div style="flex:131"></div><div class="thumb" style="flex:357"></div><div style="flex:78"></div><button aria-label="Scroll down"><svg width="9" height="6"><path d="M.5 1l4 4 4-4" fill="none" stroke="#555" stroke-width="2"/></svg></button></div>
</div>
<div class="sbh"><button aria-label="Scroll left"><svg width="6" height="9"><path d="M5 .5l-4 4 4 4" fill="none" stroke="#555" stroke-width="2"/></svg></button><div style="flex:487"></div><div class="thumb" style="flex:450"></div><div style="flex:484"></div><button aria-label="Scroll right"><svg width="6" height="9"><path d="M1 .5l4 4-4 4" fill="none" stroke="#555" stroke-width="2"/></svg></button>
<svg width="18" height="16" fill="#bfbfbf"><path d="M12 3h2v2h-2zM12 7h2v2h-2zM12 11h2v2h-2zM8 7h2v2H8zM8 11h2v2H8zM4 11h2v2H4z"/></svg></div>
</div>
</div>

<div class="lower d-flex"><div class="lower-in flex-grow-1 d-flex flex-column" style="min-width:0">
<div class="browsebar d-flex align-items-center"><label for="br">Browse</label><select id="br" class="combo"><option>Pipe</option></select><button>Print</button></div>
<div class="tabs d-flex" role="tablist">
<button class="on" role="tab"><svg width="16" height="16"><path fill="#c4c4c4" d="M0 0h16v16H0z"/><path d="M5 3v10h2q4 0 4-5T7 3z" fill="none" stroke="#00f" stroke-width="2"/></svg>Data</button>
<button role="tab"><svg width="16" height="16"><use href="#sheet"/></svg>Results</button>
<button role="tab"><svg width="16" height="16"><path fill="#c4c4c4" d="M0 0h16v16H0z"/><path d="M1 7q2-7 5-3t4 8 5-5" fill="none" stroke="#d0103a" stroke-width="1.500"/></svg>Graphs</button>
<button role="tab"><svg width="16" height="16"><path fill="#c4c4c4" d="M0 0h16v16H0z"/><path d="M1 7q2-7 5-3t4 5 5-2" fill="none" stroke="#d0103a" stroke-width="1.500"/><path d="M5 8.500h9v6.500H5z" fill="#ff6" stroke="#008"/><path d="M6 10.500h7M6 12.500h7" stroke="#222"/></svg>Result Graphs</button>
<button role="tab"><svg width="16" height="16"><path fill="#c4c4c4" d="M0 0h16v16H0z"/><path d="M2.500 2.500h11v12h-11zM2.500 5.500h11M6.500 2.500v12M9.500 2.500v12" fill="none" stroke="#000"/></svg>Tables</button>
<button role="tab"><svg width="16" height="16"><path fill="#c4c4c4" d="M0 0h16v16H0z"/><path d="M5 14V3h7M5 8h5" fill="none" stroke="#000" stroke-width="2.500"/></svg>Forces</button>
<button role="tab"><svg width="16" height="16"><path fill="#f3dede" d="M0 0h16v16H0z"/><path fill="#fff" stroke="#d02030" d="M2.500 1.500h11v13h-11z"/><path stroke="#d02030" d="M4 4.500h3M4 7.500h3M4 10.500h3M4 12.500h3M9 4.500h3M9 7.500h3M9 10.500h3M9 12.500h3"/></svg>Tabular results</button>
</div>
<div class="gridbox d-flex flex-grow-1">
<div class="flex-grow-1" style="min-width:0"><table class="g">
<colgroup><col style="width:35px"><col style="width:40px"><col style="width:70px"><col style="width:80px"><col style="width:123px"><col style="width:60px"><col style="width:49px"><col style="width:110px"><col style="width:70px"><col style="width:78px"><col style="width:100px"><col style="width:129px"></colgroup>
<thead><tr><th><svg width="16" height="16"><use href="#pipe"/></svg></th><th>Label</th><th>Input node</th><th>Output node</th><th>Type</th><th>Diameter</th><th>Length</th><th>Net height change</th><th>Roughness</th><th>Wavespeed</th><th>Results selected?</th><th>Section Type</th></tr>
<tr><th></th><th></th><th></th><th></th><th></th><th>mm</th><th>m</th><th>m</th><th>mm</th><th>m/sec</th><th></th><th></th></tr></thead>
<tbody>
<tr><th>1</th><td>5</td><td class="ro">15</td><td class="ro">5</td><td class="p-sel"><select aria-label="Type 1"><option>JIS TC02 Spec</option></select></td><td class="p-sel"><select aria-label="Diameter 1"><option>600</option></select></td><td>0.87</td><td>0</td><td>0.0457</td><td class="ro">1247.9723</td><td class="ro">NO</td><td class="p-sel"><select aria-label="Section 1"><option>Constant Gradient</option></select></td></tr>
<tr><th>2</th><td>6</td><td class="ro">5</td><td class="ro">14</td><td class="p-sel"><select aria-label="Type 2"><option>JIS TC02 Spec</option></select></td><td class="p-sel"><select aria-label="Diameter 2"><option>600</option></select></td><td>0.87</td><td>0</td><td>0.0457</td><td class="ro">1247.9723</td><td class="ro">NO</td><td class="p-sel"><select aria-label="Section 2"><option>Constant Gradient</option></select></td></tr>
<tr><th>3</th><td>7</td><td class="ro">16</td><td class="ro">17</td><td class="p-sel"><select aria-label="Type 3"><option>JIS TC02 Spec</option></select></td><td class="p-sel"><select aria-label="Diameter 3"><option>750</option></select></td><td>4.53</td><td>0</td><td>0.0457</td><td class="ro">1214.52153</td><td class="ro">NO</td><td class="p-sel"><select aria-label="Section 3"><option>Constant Gradient</option></select></td></tr>
<tr><th>4</th><td>9</td><td class="ro">17</td><td class="ro">22</td><td class="p-sel"><select aria-label="Type 4"><option>JIS TC02 Spec</option></select></td><td class="p-sel"><select aria-label="Diameter 4"><option>750</option></select></td><td>5.6</td><td>0</td><td>0.0457</td><td class="ro">1214.52153</td><td class="ro">NO</td><td class="p-sel"><select aria-label="Section 4"><option>Constant Gradient</option></select></td></tr>
<tr><th>5</th><td>11</td><td class="ro">22</td><td class="ro">37</td><td class="p-sel"><select aria-label="Type 5"><option>JIS TC02 Spec</option></select></td><td class="p-sel"><select aria-label="Diameter 5"><option>750</option></select></td><td>23.2</td><td>0</td><td>0.0457</td><td class="ro">1214.52153</td><td class="ro">NO</td><td class="p-sel"><select aria-label="Section 5"><option>Constant Gradient</option></select></td></tr>
<tr><th></th><td></td><td class="ro"></td><td class="ro"></td><td></td><td></td><td></td><td></td><td></td><td class="ro"></td><td class="ro"></td><td></td></tr>
</tbody></table></div>
<div class="sbv"><button aria-label="Scroll rows up"><svg width="9" height="6"><path d="M.5 5l4-4 4 4" fill="none" stroke="#555" stroke-width="2"/></svg></button><div class="thumb" style="flex:22"></div><div style="flex:119"></div></div>
</div>
</div></div>
</section>

<aside class="dock d-flex flex-column">
<div class="grip d-flex align-items-center"><span></span><button aria-label="Close properties"><svg width="7" height="7"><path d="M1 1l5 5M6 1L1 6" stroke="#000" stroke-width="2"/></svg></button></div>
<div class="props"><div class="props-body d-flex">
<div class="flex-grow-1"><table class="g">
<colgroup><col style="width:119px"><col style="width:100px"><col style="width:90px"></colgroup>
<thead><tr><th><svg width="16" height="16" color="#777"><use href="#pumpi"/></svg></th><th colspan="2">Pump</th></tr></thead>
<tbody>
<tr><td>Label</td><td>17</td><td></td></tr>
<tr><td>Input node</td><td class="ro">85</td><td></td></tr>
<tr><td>Output node</td><td class="ro">84</td><td></td></tr>
<tr><td>Input info. node</td><td class="ro">86</td><td></td></tr>
<tr><td>Type</td><td class="p-sel"><select aria-label="Pump type"><option>Framo</option></select></td><td></td></tr>
<tr><td>Curve type</td><td class="ro">Quadratic</td><td></td></tr>
<tr><td>Coefficient (quadr...</td><td class="ro">-1.0741224e-06</td><td class="unit">[m<sup>3</sup>/h, bar fluid]</td></tr>
<tr><td>Coefficient (linear)</td><td class="ro">-1.7094941e-05</td><td class="unit">[m<sup>3</sup>/h, bar fluid]</td></tr>
<tr><td>Coefficient (consta...</td><td class="ro">15.80707</td><td class="unit">bar fluid</td></tr>
<tr><td>Minimum flow</td><td class="ro">0</td><td class="unit">m<sup>3</sup>/h</td></tr>
<tr><td>Maximum flow</td><td class="ro">1550</td><td class="unit">m<sup>3</sup>/h</td></tr>
<tr><td>Results selected?</td><td class="ro">NO</td><td></td></tr>
<tr><td colspan="3" class="red">Results</td></tr>
<tr><td>Min inlet pressure</td><td class="ro">n/a</td><td></td></tr>
<tr><td>Time</td><td class="ro">n/a</td><td></td></tr>
<tr><td>Max inlet pressure</td><td class="ro">n/a</td><td></td></tr>
<tr><td>Time</td><td class="ro">n/a</td><td></td></tr>
<tr><td>Min outlet pressure</td><td class="ro">n/a</td><td></td></tr>
</tbody></table></div>
<div class="sbv"><button aria-label="Scroll properties up"><svg width="9" height="6"><path d="M.5 5l4-4 4 4" fill="none" stroke="#555" stroke-width="2"/></svg></button><div class="thumb" style="flex:201"></div><div style="flex:172"></div><button aria-label="Scroll properties down"><svg width="9" height="6"><path d="M.5 1l4 4 4-4" fill="none" stroke="#555" stroke-width="2"/></svg></button></div>
</div></div>
<div class="ptabs d-flex align-items-start">
<button class="ptab on"><svg width="16" height="16"><use href="#sheet"/></svg>Properties</button>
<button class="ptab"><svg width="16" height="16"><path fill="#c4c4c4" d="M0 0h16v16H0z"/><path d="M8 1l7 7-7 7-7-7z" fill="#00c"/><path d="M6.500 12V4.500H10M6.500 8H9" fill="none" stroke="#fff"/></svg>Fittings</button>
<div class="ms-auto d-flex gap-2 pt-2"><button aria-label="Previous"><svg width="15" height="12"><path d="M0 6l6-6v3h8v6H6v3z" fill="#f00"/></svg></button><button aria-label="Next"><svg width="15" height="12"><path d="M15 6L9 0v3H1v6h8v3z" fill="#f00"/></svg></button></div>
</div>
<div class="over flex-grow-1">
<div class="grip d-flex align-items-center"><span></span><button aria-label="Close overview"><svg width="7" height="7"><path d="M1 1l5 5M6 1L1 6" stroke="#000" stroke-width="2"/></svg></button></div>
<div class="mapbox"><svg viewBox="64 720 1053 1053" width="351" height="351" role="img" aria-label="Overview map" fill="none" stroke="#000" stroke-width="3">
<path d="M82 738V760H179V738M116 738V760M77 740h8M113 740h8M176 740h8M146 760V778H179V802H209V820M82 883V859H179V883M116 883V859M78 882h6M114 882h6M178 882h6M146 859V841H179V820H221V808H305V829H344V822H356V824H460"/>
<path d="M186 801h8M186 819h8M240 806h8M278 806h8M372 826l5-4 4 4M418 826l5-4 4 4"/>
<path d="M460 797H551V842H460zM460 820H574V815H590V820H620L625 824H1106V898"/>
<path d="M454 822L449 845V878H464M518 797V886H464V866H496V842M507 820V876H464M470 797h8M470 820h8M470 842h8M530 797h8M530 820h8M530 842h8"/>
<path d="M490 859h10M502 859h10M513 859h8" stroke-width="6"/>
<path d="M625 824V871H622M643 824V886H625M659 824V898H642M728 824V871H709M746 824V886H727M764 824V898H744M791 824V871H772M808 824V886H791M826 824V898H808M878 824V871H859M893 824V886H874M910 824V898H890M950 824V871H933M986 824V898H967M1072 824V871H1054M1088 824V886H1069M1106 898H1086"/>
<path d="M630 886h12M648 898h12M714 871h12M732 886h12M750 898h12M777 871h12M796 886h12M814 898h12M864 871h12M879 886h12M896 898h12M938 871h12M972 898h12M1059 871h12M1074 886h12M1092 898h12" stroke-width="6" stroke-dasharray="3 3"/>
<path d="M606 871h17M612 868h6" stroke="#f00"/>
<path d="M391 760H791V922H391z" stroke="#d0215a"/>
</svg></div>
</div>
</aside>
</main>

<footer class="statusbar d-flex align-items-center"><div class="flex-grow-1">For Help, press F1</div><span style="width:128px">Default</span><span style="width:58px"></span><span style="width:128px">Default</span><span style="width:58px"></span><span style="width:31px"></span><span style="width:36px">NUM</span><span style="width:34px"></span></footer>
<script src="https://cdn.jsdelivr.net/npm/bootstrap@5.3.0/dist/js/bootstrap.bundle.min.js"></script>
</body>
</html>
